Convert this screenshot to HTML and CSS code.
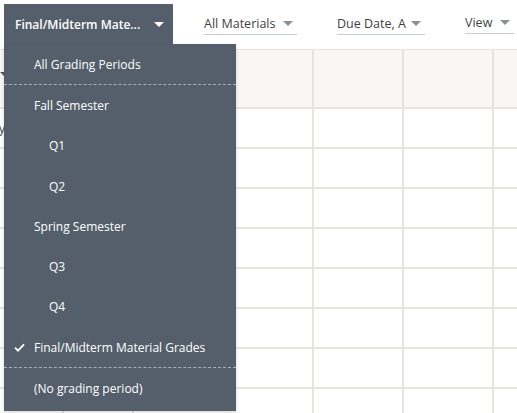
FILE: index.html
```html
<!DOCTYPE html>
<html lang="en">
    <head>
        <meta charset="UTF-8">
        <meta name="viewport" content="width=device-width, initial-scale=1.0">
        <title>Gradebook Materials</title>
        <link rel="stylesheet" href="styles.css">
    </head>
    <body>
        <div class="page">
            <div class="toolbar">
                <div class="period-picker">
                    <button class="period-btn">
                        <span>Final/Midterm Mate...</span>
                        <span class="caret caret-light"></span>
                    </button>
                    <ul class="period-menu">
                        <li class="menu-item">All Grading Periods</li>
                        <li class="menu-sep"></li>
                        <li class="menu-item">Fall Semester</li>
                        <li class="menu-item sub">Q1</li>
                        <li class="menu-item sub">Q2</li>
                        <li class="menu-item">Spring Semester</li>
                        <li class="menu-item sub">Q3</li>
                        <li class="menu-item sub">Q4</li>
                        <li class="menu-item selected">
                            <svg class="check" width="11" height="9" viewBox="0 0 11 9"><path d="M1 4.6l3 3L10 1.4" fill="none" stroke="#fff" stroke-width="1.8"/></svg>
                            Final/Midterm Material Grades
                        </li>
                        <li class="menu-sep"></li>
                        <li class="menu-item">(No grading period)</li>
                    </ul>
                </div>
                <div class="filter f-materials"><span>All Materials</span><span class="caret"></span></div>
                <div class="filter f-sort"><span>Due Date, A</span><span class="caret"></span></div>
                <div class="filter f-view"><span>View</span><span class="caret"></span></div>
            </div>

            <div class="grid">
                <div class="row head">
                    <div class="cell c0"><span class="sort-tip"></span></div>
                    <div class="cell c1"></div>
                    <div class="cell c2"></div>
                    <div class="cell c3"></div>
                    <div class="cell c4"></div>
                    <div class="cell c5"></div>
                    <div class="cell c6"></div>
                </div>
                <div class="row">
                    <div class="cell c0 cut"><span>Category</span></div>
                    <div class="cell c1"></div><div class="cell c2"></div><div class="cell c3"></div><div class="cell c4"></div><div class="cell c5"></div><div class="cell c6"></div>
                </div>
                <div class="row">
                    <div class="cell c0"></div><div class="cell c1"></div><div class="cell c2"></div><div class="cell c3"></div><div class="cell c4"></div><div class="cell c5"></div><div class="cell c6"></div>
                </div>
                <div class="row">
                    <div class="cell c0"></div><div class="cell c1"></div><div class="cell c2"></div><div class="cell c3"></div><div class="cell c4"></div><div class="cell c5"></div><div class="cell c6"></div>
                </div>
                <div class="row">
                    <div class="cell c0"></div><div class="cell c1"></div><div class="cell c2"></div><div class="cell c3"></div><div class="cell c4"></div><div class="cell c5"></div><div class="cell c6"></div>
                </div>
                <div class="row">
                    <div class="cell c0"></div><div class="cell c1"></div><div class="cell c2"></div><div class="cell c3"></div><div class="cell c4"></div><div class="cell c5"></div><div class="cell c6"></div>
                </div>
                <div class="row">
                    <div class="cell c0"></div><div class="cell c1"></div><div class="cell c2"></div><div class="cell c3"></div><div class="cell c4"></div><div class="cell c5"></div><div class="cell c6"></div>
                </div>
                <div class="row">
                    <div class="cell c0"></div><div class="cell c1"></div><div class="cell c2"></div><div class="cell c3"></div><div class="cell c4"></div><div class="cell c5"></div><div class="cell c6"></div>
                </div>
                <div class="row">
                    <div class="cell c0"></div><div class="cell c1"></div><div class="cell c2"></div><div class="cell c3"></div><div class="cell c4"></div><div class="cell c5"></div><div class="cell c6"></div>
                </div>
            </div>
        </div>
    </body>
</html>
```

FILE: styles.css
```css
html, body {
    margin: 0;
    padding: 0;
    background: #fff;
    overflow: hidden;
}
body {
    font-family: "Open Sans", "Liberation Sans", sans-serif;
    font-size: 12px;
    color: #333;
}
.page {
    width: 517px;
    height: 413px;
    overflow: hidden;
}

/* top filter bar */
.toolbar {
    height: 49px;
    display: flex;
    align-items: flex-start;
    position: relative;
    z-index: 2;
}
.period-picker {
    position: relative;
    margin: 4px 0 0 4px;
}
.period-btn {
    width: 169px;
    height: 40px;
    border: none;
    background: #545f6b;
    color: #fff;
    font: 600 12px "Open Sans", "Liberation Sans", sans-serif;
    display: flex;
    align-items: center;
    justify-content: space-between;
    padding: 0 9px 0 11px;
    cursor: pointer;
}
.caret {
    width: 0;
    height: 0;
    border-left: 5px solid transparent;
    border-right: 5px solid transparent;
    border-top: 5px solid #8a9199;
}
.caret-light { border-top-color: #fff; }

.filter {
    display: flex;
    align-items: center;
    justify-content: space-between;
    height: 22px;
    margin-top: 12px;
    border-bottom: 1px solid #c7ccd1;
    font-size: 12.5px;
    color: #3f3f3f;
}
.filter .caret { margin-right: 4px; }
.f-materials { width: 93px; margin-left: 31px; }
.f-sort { width: 88px; margin-left: 40px; }
.f-view { width: 49px; margin-left: 40px; margin-top: 11px; }

/* grading period menu */
.period-menu {
    position: absolute;
    top: 40px;
    left: 0;
    width: 232px;
    margin: 0;
    padding: 0 0 2px;
    list-style: none;
    background: #545f6b;
    color: #fff;
    box-shadow: 0 2px 4px rgba(0,0,0,0.15);
}
.menu-item {
    height: 40.3px;
    display: flex;
    align-items: center;
    padding-left: 30px;
    font-size: 12px;
    white-space: nowrap;
}
.menu-item.sub { padding-left: 45px; }
.menu-item.selected { padding-left: 10px; }
.check { margin-right: 9px; }
.menu-sep {
    border-top: 1px dashed #a7aeb6;
    height: 0;
}

/* gradebook grid */
.grid {
    border-top: 1px solid #e7e4e0;
}
.row {
    display: flex;
    height: 40px;
    border-bottom: 2px solid #e7e4e0;
    box-sizing: border-box;
}
.row.head {
    height: 59px;
    background: #f8f7f5;
}
.cell {
    border-right: 2px solid #e7e4e0;
    box-sizing: border-box;
    flex: none;
}
.c0 { width: 5px; border-right: none; }
.c1 { width: 59px; }
.c2 { width: 70px; }
.c3 { width: 180px; }
.c4 { width: 90px; }
.c5 { width: 90px; }
.c6 { width: 90px; }
.cut {
    display: flex;
    justify-content: flex-end;
    align-items: center;
    font-size: 12px;
    color: #444;
    white-space: nowrap;
}
.sort-tip {
    display: block;
    margin-top: 22px;
    width: 0;
    height: 0;
    border-left: 5px solid transparent;
    border-top: 5px solid #555;
}
```
